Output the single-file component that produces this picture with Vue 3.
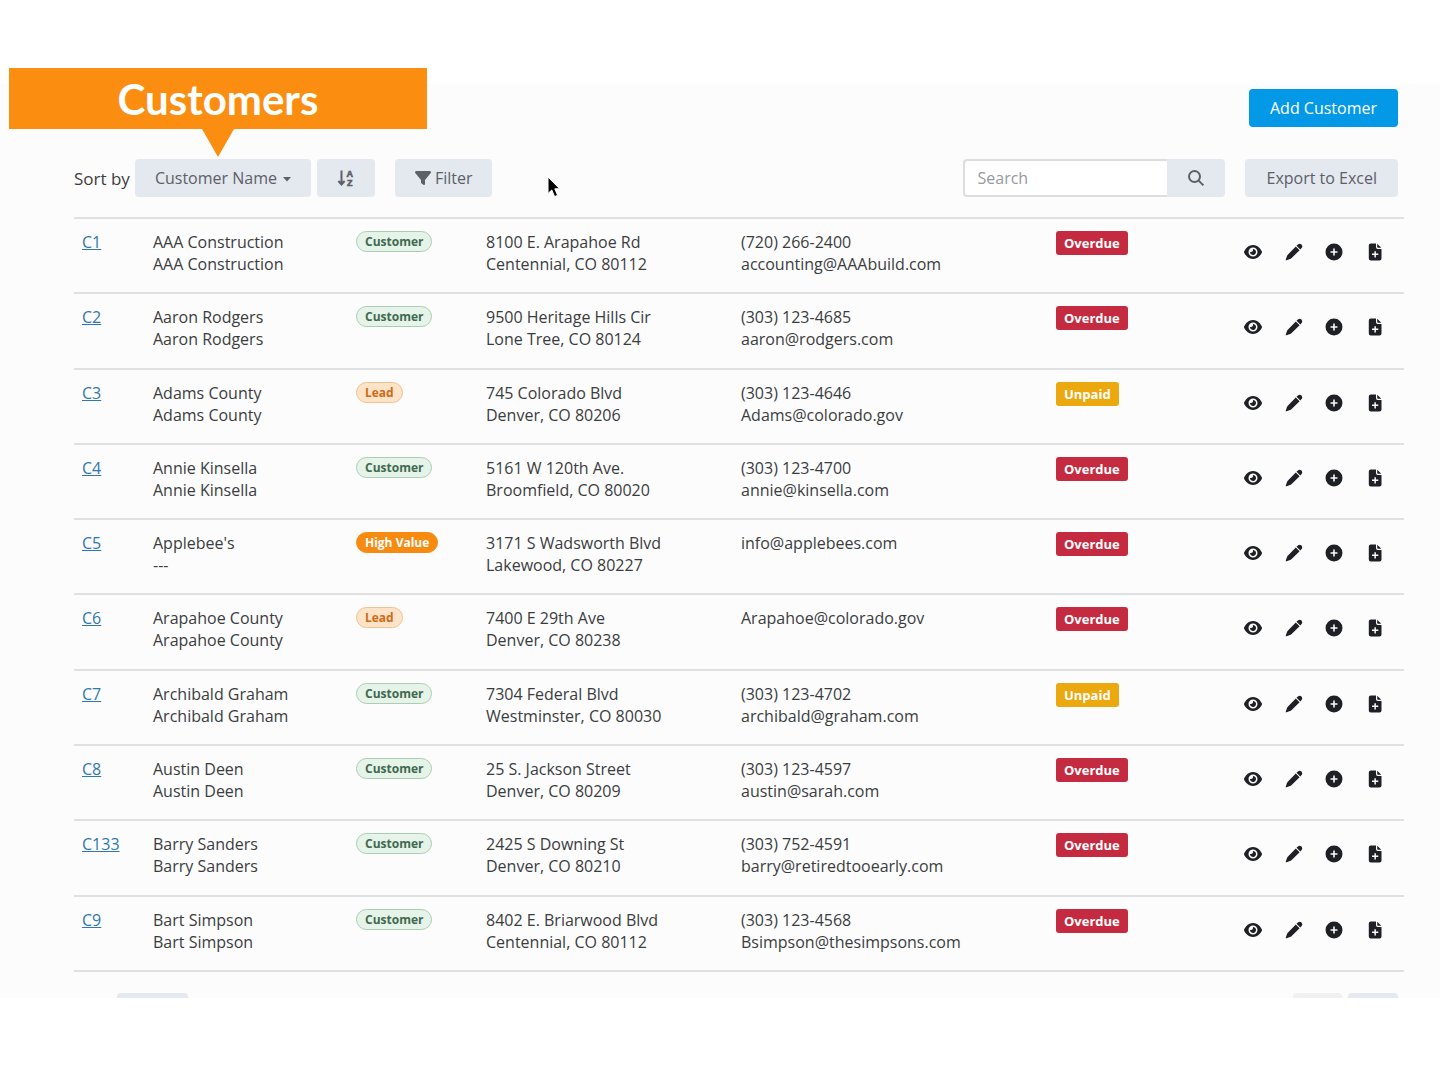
<template>
  <div class="page">
    <h1 class="callout">Customers</h1>

    <main class="panel">
      <div class="top-bar">
        <button type="button" class="btn wide primary">Add Customer</button>
      </div>

      <div class="toolbar">
        <label for="sort" class="sort-label">Sort by</label>
        <div class="sort-select">
          <select id="sort" v-model="sortBy" class="btn">
            <option value="name">Customer Name</option>
            <option value="id">Customer ID</option>
          </select>
          <svg class="caret" viewBox="0 0 8 5"><path d="M0 0h8L4 4.5z" /></svg>
        </div>
        <button type="button" class="btn sort-dir" aria-label="Sort direction">
          <svg viewBox="0 0 18 18">
            <path d="M4.5 1.5V15M1.4 12L4.5 15.4L7.6 12" class="line" />
            <text x="9.5" y="8">A</text>
            <text x="10" y="17">Z</text>
          </svg>
        </button>
        <button type="button" class="btn filter">
          <svg viewBox="0 0 512 512">
            <path d="M3.9 54.9C10.5 40.9 24.5 32 40 32H472c15.5 0 29.5 8.9 36.1 22.9s4.6 30.5-5.2 42.5L320 320.9V448c0 12.1-6.8 23.2-17.7 28.6s-23.8 4.3-33.5-3l-64-48c-8.1-6-12.8-15.5-12.8-25.6V320.9L9 97.3C-.7 85.4-2.8 68.8 3.9 54.9z" />
          </svg>
          Filter
        </button>

        <form class="search" @submit.prevent>
          <input v-model="search" type="text" placeholder="Search" aria-label="Search" />
          <button type="submit" class="btn" aria-label="Run search">
            <svg viewBox="0 0 18 18">
              <circle cx="7.5" cy="7.5" r="5.5" class="line" />
              <path d="M11.6 11.6l4.8 4.8" class="line" />
            </svg>
          </button>
        </form>
        <button type="button" class="btn wide export">Export to Excel</button>
      </div>

      <table class="customers">
        <colgroup>
          <col class="col-id" />
          <col class="col-name" />
          <col class="col-type" />
          <col class="col-address" />
          <col class="col-contact" />
          <col class="col-status" />
          <col class="col-actions" />
        </colgroup>
        <tbody>
          <tr v-for="c in customers" :key="c.id">
            <td><a href="#">{{ c.id }}</a></td>
            <td>{{ c.name }}<br />{{ c.company || c.name }}</td>
            <td><span class="pill" :class="pillClass[c.type]">{{ c.type }}</span></td>
            <td>{{ c.street }}<br />{{ c.city }}</td>
            <td><template v-if="c.phone">{{ c.phone }}<br /></template>{{ c.email }}</td>
            <td><span class="status" :class="c.status.toLowerCase()">{{ c.status }}</span></td>
            <td>
              <div class="actions">
                <button type="button" aria-label="View">
                  <svg viewBox="0 0 576 512">
                    <path d="M288 32c-80.8 0-145.5 36.8-192.6 80.6C48.6 156 17.3 208 2.5 243.7c-3.3 7.9-3.3 16.7 0 24.6C17.3 304 48.6 356 95.4 399.4C142.5 443.2 207.2 480 288 480s145.5-36.8 192.6-80.6c46.8-43.5 78.1-95.4 93-131.1c3.3-7.9 3.3-16.7 0-24.6c-14.9-35.7-46.2-87.7-93-131.1C433.5 68.8 368.8 32 288 32zM144 256a144 144 0 1 1 288 0 144 144 0 1 1 -288 0zm144-64c0 35.3-28.7 64-64 64c-7.1 0-13.9-1.2-20.3-3.3c-5.5-1.8-11.9 1.6-11.7 7.4c.3 6.9 1.3 13.8 3.2 20.7c13.7 51.2 66.4 81.6 117.6 67.9s81.6-66.4 67.9-117.6c-11.1-41.5-47.8-69.4-88.6-71.1c-5.8-.2-9.2 6.1-7.4 11.7c2.1 6.4 3.3 13.2 3.3 20.3z" />
                  </svg>
                </button>
                <button type="button" aria-label="Edit">
                  <svg viewBox="0 0 18 18">
                    <path d="M10.8 3.4L14.6 7.2L6.4 15.2Q5.8 15.8 5 16.1L1.6 17.3Q0.5 17.6 0.8 16.5L2 13Q2.3 12.1 3 11.4zM11.5 2.7L13.2 1.2Q14.9 0 16.5 1.5Q18 3.2 16.8 4.8L15.3 6.5z" />
                  </svg>
                </button>
                <button type="button" aria-label="Add">
                  <svg viewBox="-16 -16 544 544">
                    <path d="M256 512A256 256 0 1 0 256 0a256 256 0 1 0 0 512zM232 344V280H168c-13.3 0-24-10.7-24-24s10.7-24 24-24h64V168c0-13.3 10.7-24 24-24s24 10.7 24 24v64h64c13.3 0 24 10.7 24 24s-10.7 24-24 24H280v64c0 13.3-10.7 24-24 24s-24-10.7-24-24z" />
                  </svg>
                </button>
                <button type="button" aria-label="New document">
                  <svg viewBox="0 0 18 18">
                    <path d="M4.5 0.5H10V4.3Q10 6 11.7 6H15.5V15.5Q15.5 17.5 13.5 17.5H4.8Q2.8 17.5 2.8 15.5V2.5Q2.8 0.5 4.8 0.5zM8.4 8.2V10.6H6V12.1H8.4V14.6H9.9V12.1H12.3V10.6H9.9V8.2zM11.2 0.7L15.3 4.8H12Q11.2 4.8 11.2 4z" fill-rule="evenodd" />
                  </svg>
                </button>
              </div>
            </td>
          </tr>
        </tbody>
      </table>

      <div class="pager">
        <button type="button" class="btn size" aria-label="Page size"></button>
        <button type="button" class="btn prev" aria-label="Previous" disabled></button>
        <button type="button" class="btn next" aria-label="Next"></button>
      </div>
    </main>

    <svg class="cursor" viewBox="0 0 14 22">
      <path d="M1 1V17.5L4.8 14L7.6 20.6L10.6 19.3L7.8 12.8H12.6z" />
    </svg>
  </div>
</template>

<script setup>
import { ref } from 'vue'

const sortBy = ref('name')
const search = ref('')

const pillClass = {
  Customer: 'customer',
  Lead: 'lead',
  'High Value': 'high-value'
}

const customers = [
  { id: 'C1', name: 'AAA Construction', type: 'Customer', street: '8100 E. Arapahoe Rd', city: 'Centennial, CO 80112', phone: '(720) 266-2400', email: 'accounting@AAAbuild.com', status: 'Overdue' },
  { id: 'C2', name: 'Aaron Rodgers', type: 'Customer', street: '9500 Heritage Hills Cir', city: 'Lone Tree, CO 80124', phone: '(303) 123-4685', email: 'aaron@rodgers.com', status: 'Overdue' },
  { id: 'C3', name: 'Adams County', type: 'Lead', street: '745 Colorado Blvd', city: 'Denver, CO 80206', phone: '(303) 123-4646', email: 'Adams@colorado.gov', status: 'Unpaid' },
  { id: 'C4', name: 'Annie Kinsella', type: 'Customer', street: '5161 W 120th Ave.', city: 'Broomfield, CO 80020', phone: '(303) 123-4700', email: 'annie@kinsella.com', status: 'Overdue' },
  { id: 'C5', name: "Applebee's", company: '---', type: 'High Value', street: '3171 S Wadsworth Blvd', city: 'Lakewood, CO 80227', email: 'info@applebees.com', status: 'Overdue' },
  { id: 'C6', name: 'Arapahoe County', type: 'Lead', street: '7400 E 29th Ave', city: 'Denver, CO 80238', email: 'Arapahoe@colorado.gov', status: 'Overdue' },
  { id: 'C7', name: 'Archibald Graham', type: 'Customer', street: '7304 Federal Blvd', city: 'Westminster, CO 80030', phone: '(303) 123-4702', email: 'archibald@graham.com', status: 'Unpaid' },
  { id: 'C8', name: 'Austin Deen', type: 'Customer', street: '25 S. Jackson Street', city: 'Denver, CO 80209', phone: '(303) 123-4597', email: 'austin@sarah.com', status: 'Overdue' },
  { id: 'C133', name: 'Barry Sanders', type: 'Customer', street: '2425 S Downing St', city: 'Denver, CO 80210', phone: '(303) 752-4591', email: 'barry@retiredtooearly.com', status: 'Overdue' },
  { id: 'C9', name: 'Bart Simpson', type: 'Customer', street: '8402 E. Briarwood Blvd', city: 'Centennial, CO 80112', phone: '(303) 123-4568', email: 'Bsimpson@thesimpsons.com', status: 'Overdue' }
]
</script>

<style>
body {
  background: #fff;
}
</style>

<style scoped>
.page {
  position: relative;
  height: 100vh;
  padding: 84px 0 68px;
  box-sizing: border-box;
  font-family: "Open Sans", "Noto Sans", sans-serif;
  font-size: 16px;
  color: #3b3c3f;
}

* {
  box-sizing: border-box;
}

.callout {
  position: absolute;
  left: 9px;
  top: 68px;
  width: 418px;
  height: 61px;
  margin: 0;
  background: #fb8d10;
  color: #fff;
  font-family: Lato, sans-serif;
  font-size: 42px;
  font-weight: 700;
  line-height: 62px;
  text-align: center;
}

.callout::after {
  content: "";
  position: absolute;
  left: 50%;
  top: 100%;
  transform: translateX(-50%);
  border: 16px solid transparent;
  border-top: 28px solid #fb8d10;
  border-bottom: 0;
}

.panel {
  height: 100%;
  padding: 5px 36px 0 74px;
  background: #fcfcfc;
  overflow: hidden;
}

.top-bar,
.toolbar,
.pager {
  display: flex;
  align-items: center;
  margin-right: 6px;
}

.top-bar {
  justify-content: flex-end;
}

.btn {
  height: 38px;
  padding: 0 20px;
  border: 0;
  border-radius: 4px;
  background: #e4e8ef;
  color: #5c6067;
  font: inherit;
  cursor: pointer;
}

.btn.wide {
  padding: 0 21px;
}

.btn svg {
  width: 18px;
  height: 18px;
  fill: currentColor;
}

.line {
  fill: none;
  stroke: currentColor;
  stroke-width: 2;
}

.btn.primary {
  background: #0499e6;
  color: #fff;
}

.toolbar {
  margin-top: 32px;
}

.sort-label {
  margin-right: 5px;
  font-size: 17px;
}

.sort-select {
  position: relative;
}

.sort-select select {
  width: 176px;
  appearance: none;
}

.caret {
  position: absolute;
  right: 20px;
  top: 18px;
  width: 8px;
  height: 5px;
  fill: #5c6067;
  pointer-events: none;
}

.sort-dir {
  display: flex;
  align-items: center;
  margin-left: 6px;
}

.sort-dir text {
  font-family: "Liberation Sans", sans-serif;
  font-size: 9px;
  font-weight: 700;
  stroke: currentColor;
  stroke-width: 0.6;
}

.filter {
  display: flex;
  align-items: center;
  gap: 4px;
  margin-left: 20px;
}

.filter svg {
  width: 16px;
}

.search {
  display: flex;
  margin-left: auto;
}

.search input {
  width: 204px;
  height: 38px;
  padding: 0 12px;
  border: 2px solid #dcdddf;
  border-right: 0;
  border-radius: 4px 0 0 4px;
  background: #fff;
  color: inherit;
  font: inherit;
}

.search input::placeholder {
  color: #97999c;
}

.search .btn {
  display: flex;
  align-items: center;
  border-radius: 0 4px 4px 0;
}

.export {
  margin-left: 20px;
}

.customers {
  width: 100%;
  height: 755px;
  margin-top: 20px;
  border-collapse: collapse;
  table-layout: fixed;
}

.col-id { width: 71px; }
.col-name { width: 203px; }
.col-type { width: 130px; }
.col-address { width: 255px; }
.col-contact { width: 315px; }
.col-status { width: 188px; }
.col-actions { width: 168px; }

tr {
  border-top: 2px solid #dfe0e1;
}

tr:last-child {
  border-bottom: 2px solid #dfe0e1;
}

td {
  padding: 12px 8px 16px;
  line-height: 22px;
  vertical-align: top;
}

td a {
  color: #2f77ae;
}

.pill,
.status {
  display: block;
  width: fit-content;
  font-weight: 700;
}

.pill {
  padding: 0 8px;
  border: 1px solid;
  border-radius: 11px;
  font-size: 12px;
  line-height: 19px;
}

.customer {
  background: #e5f3e8;
  border-color: #a9cfb3;
  color: #41694f;
}

.lead {
  background: #fde3c8;
  border-color: #f3c08f;
  color: #d06a17;
}

.high-value {
  background: #f78a10;
  border-color: #f78a10;
  color: #fff;
}

.status {
  padding: 0 8px;
  border-radius: 3px;
  color: #fff;
  font-size: 13px;
  line-height: 24px;
}

.overdue {
  background: #c52b40;
}

.unpaid {
  background: #eba80f;
}

.actions {
  display: flex;
  justify-content: space-between;
  padding: 12px 12px 0 0;
}

.actions button {
  width: 18px;
  height: 18px;
  padding: 0;
  border: 0;
  background: none;
  cursor: pointer;
}

.actions svg {
  display: block;
  width: 18px;
  height: 18px;
  fill: #1f2025;
}

.pager {
  margin-top: 21px;
}

.size {
  width: 71px;
  margin-left: 43px;
}

.prev {
  width: 49px;
  margin-left: auto;
  background: #f0f0f1;
}

.next {
  width: 50px;
  margin-left: 6px;
}

.cursor {
  position: absolute;
  left: 547px;
  top: 176px;
  width: 14px;
  height: 22px;
  fill: #000;
  stroke: #fff;
  stroke-width: 1;
}
</style>
